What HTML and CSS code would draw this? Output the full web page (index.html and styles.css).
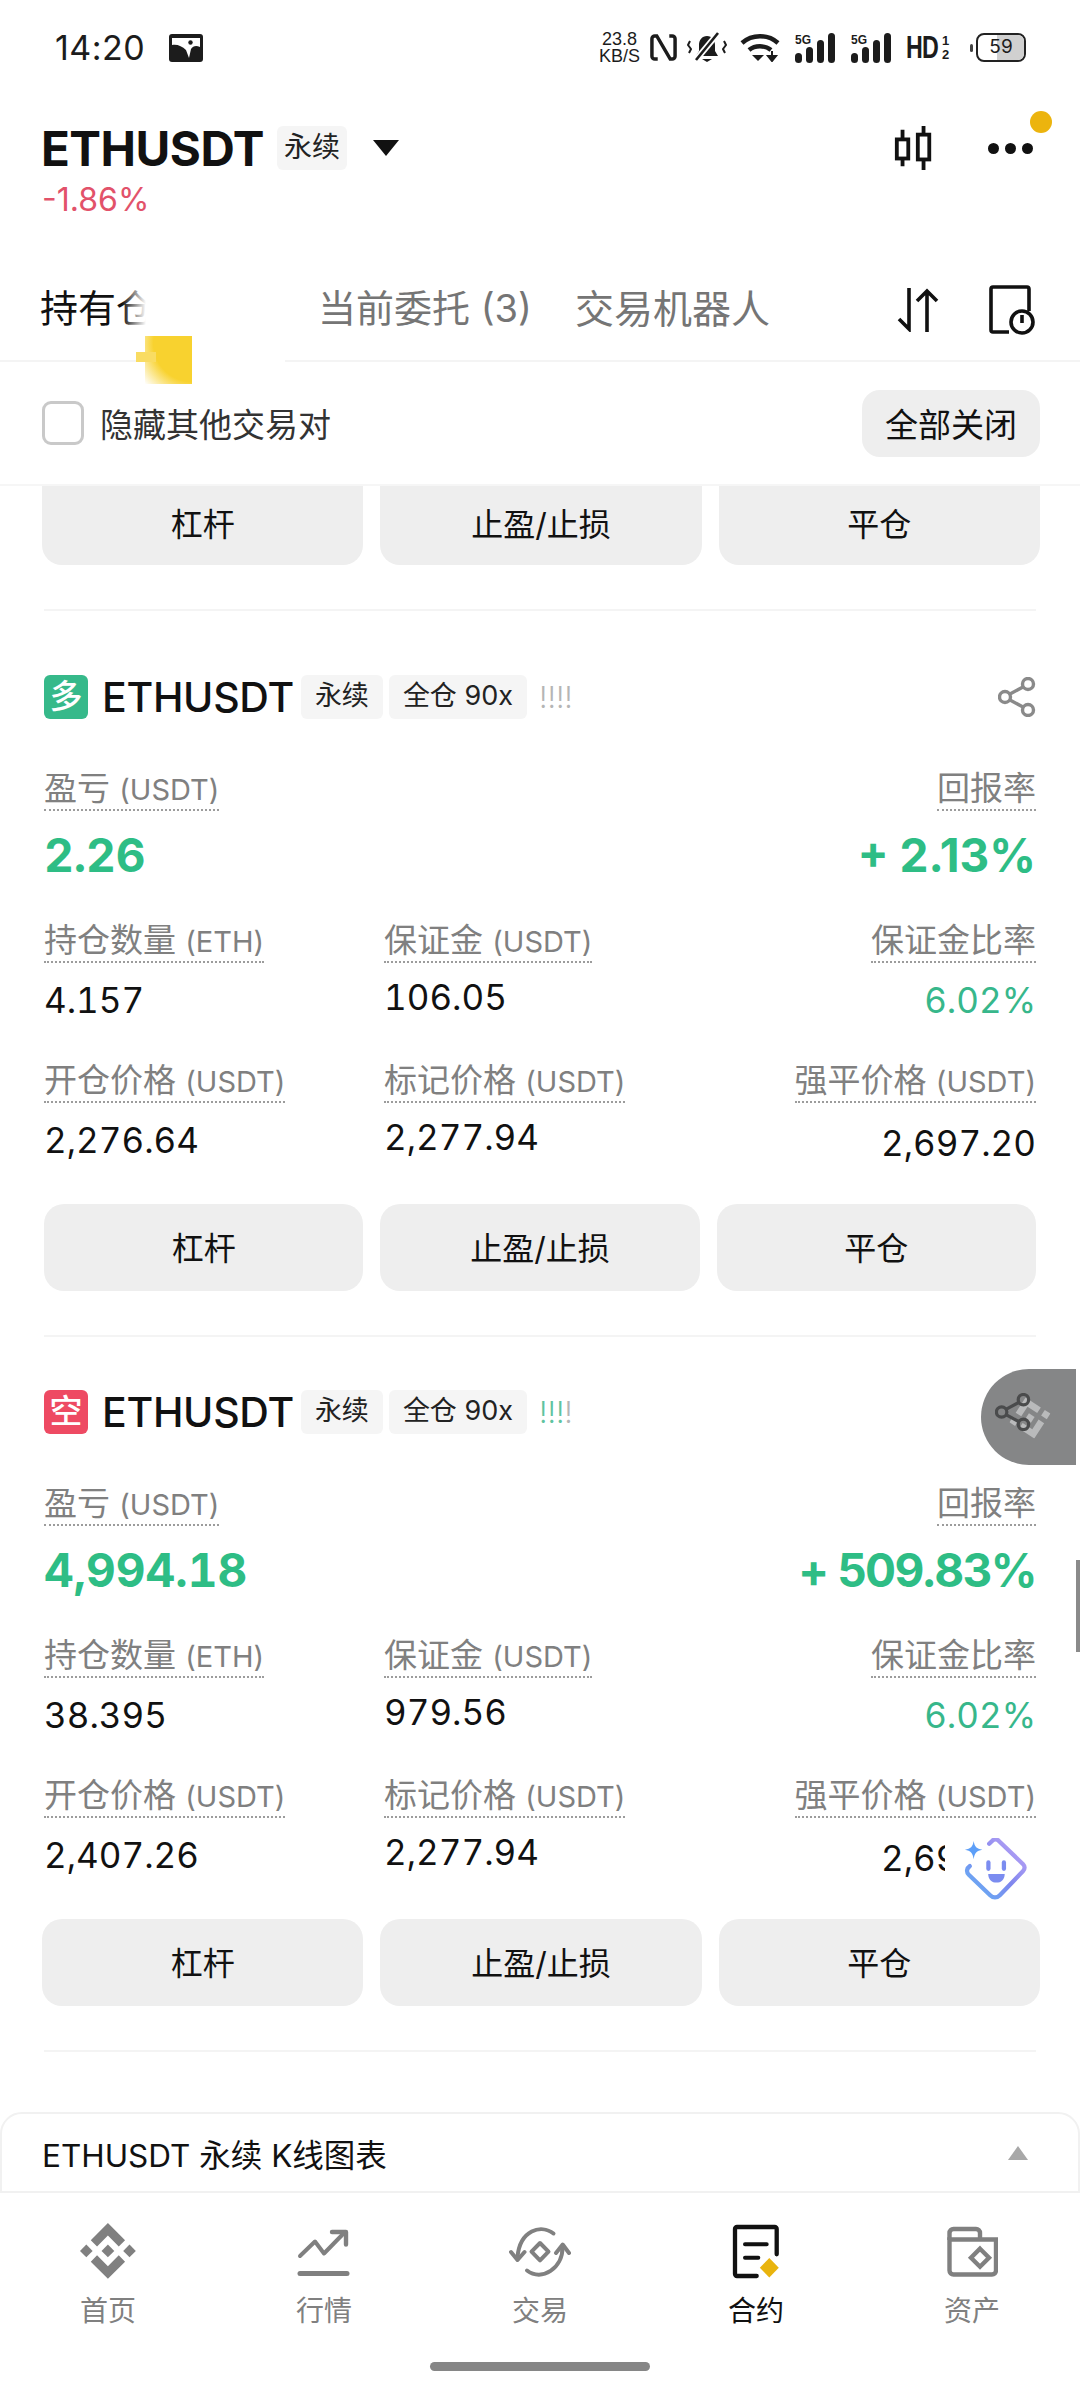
FILE: index.html
```html
<!DOCTYPE html>
<html lang="zh-CN">
<head>
    <meta charset="UTF-8">
    <meta name="viewport" content="width=device-width, initial-scale=1.0">
    <title>ETHUSDT 永续</title>
    <link rel="stylesheet" href="styles.css">
</head>
<body>
<div class="page">
    <div class="status-bar">
        <div class="status-left">
            <span class="clock">14:20</span>
            <svg class="status-app" viewBox="0 0 34 28"><rect width="34" height="28" rx="3" fill="#1c1c1c"/><path d="M3 4h28v9c-4-2-7-1-9 2l-2 9-3-8c-4-4-9-6-14-5z" fill="#fff"/><circle cx="21.500" cy="8.500" r="2.200" fill="#1c1c1c"/></svg>
        </div>
        <div class="status-right">
            <div class="net-speed"><span>23.8</span><span>KB/S</span></div>
            <svg class="icon-nfc" viewBox="0 0 28 30" fill="none" stroke="#1c1c1c" stroke-width="3.6"><path d="M8 27H5a3 3 0 0 1-3-3V6a3 3 0 0 1 3-3h2l14 24h2a3 3 0 0 0 3-3V6a3 3 0 0 0-3-3h-3"/></svg>
            <svg class="icon-bell" viewBox="0 0 40 32"><path d="M20 4c5 0 8 4 8 9v6l3 5H9l3-5v-6c0-5 3-9 8-9z" fill="#1c1c1c"/><path d="M15 27h10l-5 3z" fill="#1c1c1c"/><path d="M32 0L8 29" stroke="#fff" stroke-width="6"/><path d="M31 1L9 28" stroke="#1c1c1c" stroke-width="2.6"/><path d="M3 9l-2 4 3 4-2 4M37 9l2 4-3 4 2 4" fill="none" stroke="#1c1c1c" stroke-width="2"/></svg>
            <svg class="icon-wifi" viewBox="0 0 40 28"><path d="M2 9c10-9 26-9 36 0" fill="none" stroke="#1c1c1c" stroke-width="4.4"/><path d="M9 16c6-5 16-5 22 0" fill="none" stroke="#1c1c1c" stroke-width="4.4"/><path d="M12 21h12l-6 6z" fill="#1c1c1c"/><path d="M32 17v5M28 22h8l-4 5z" stroke="#1c1c1c" stroke-width="2" fill="#1c1c1c"/></svg>
            <svg class="icon-signal" viewBox="0 0 40 30"><g fill="#1c1c1c"><rect x="0" y="20" width="7" height="10" rx="3.5"/><rect x="11" y="14" width="7" height="16" rx="3.5"/><rect x="22" y="7" width="7" height="23" rx="3.5"/><rect x="33" y="0" width="7" height="30" rx="3.5"/></g><text x="0" y="11" class="signal-label">5G</text></svg>
            <svg class="icon-signal" viewBox="0 0 40 30"><g fill="#1c1c1c"><rect x="0" y="20" width="7" height="10" rx="3.5"/><rect x="11" y="14" width="7" height="16" rx="3.5"/><rect x="22" y="7" width="7" height="23" rx="3.5"/><rect x="33" y="0" width="7" height="30" rx="3.5"/></g><text x="0" y="11" class="signal-label">5G</text></svg>
            <div class="hd-mark"><span class="hd-text">HD</span><span class="hd-sims"><span>1</span><span>2</span></span></div>
            <div class="battery-wrap">
                <span class="battery-nub"></span>
                <div class="battery"><span class="battery-level"></span><span class="battery-num">59</span></div>
            </div>
        </div>
    </div>

    <div class="symbol-bar">
        <div class="symbol-row">
            <div class="symbol-left">
                <span class="symbol-name">ETHUSDT</span>
                <span class="tag tag-top">永续</span>
                <span class="caret"></span>
            </div>
            <div class="symbol-tools">
                <svg class="icon-candle" viewBox="0 0 44 46" fill="none" stroke="#111" stroke-width="4"><path d="M10 4v38M32 0v46"/><rect x="4" y="14" width="12" height="20" fill="#fff"/><rect x="26" y="9" width="12" height="26" fill="#fff"/></svg>
                <div class="more-dots"><i></i><i></i><i></i></div>
            </div>
        </div>
        <div class="symbol-change">-1.86%</div>
    </div>

    <div class="tabs">
        <div class="tab tab-active">持有仓位</div>
        <div class="tab tab-orders">当前委托 (3)</div>
        <div class="tab tab-bots">交易机器人</div>
        <div class="tab-tools">
            <svg class="icon-sort" viewBox="0 0 42 44" fill="none" stroke="#111" stroke-width="3.6"><path d="M12 0v41M2 31l10 10 0-10M30 44V3M20 13L30 3l10 10"/></svg>
            <svg class="icon-history" viewBox="0 0 46 50" fill="none" stroke="#111" stroke-width="3.6"><path d="M20 47H4a2 2 0 0 1-2-2V4a2 2 0 0 1 2-2h34a2 2 0 0 1 2 2v22"/><circle cx="33" cy="37" r="11"/><path d="M33 30v8"/></svg>
        </div>
    </div>

    <div class="filter-row">
        <label class="filter-check"><span class="checkbox"></span>隐藏其他交易对</label>
        <button class="close-all">全部关闭</button>
    </div>

    <div class="position-list">
        <div class="actions actions-wide actions-cut">
            <button class="action">杠杆</button>
            <button class="action">止盈/止损</button>
            <button class="action">平仓</button>
        </div>

        <div class="position-card position-card-first">
            <div class="card-head">
                <span class="side side-long">多</span>
                <span class="card-symbol">ETHUSDT</span>
                <span class="tag">永续</span>
                <span class="tag">全仓 90x</span>
                <span class="risk">!!!!</span>
                <svg class="icon-share" viewBox="0 0 38 40" fill="none" stroke="#8a8a8a" stroke-width="3.4"><circle cx="30" cy="7" r="5.5"/><circle cx="7" cy="20" r="5.5"/><circle cx="30" cy="33" r="5.5"/><path d="M12 17l13-7M12 23l13 7"/></svg>
            </div>
            <div class="pnl-row">
                <div class="cell"><span class="label">盈亏 <span class="unit">(USDT)</span></span><div class="pnl">2.26</div></div>
                <div class="cell cell-right"><span class="label">回报率</span><div class="pnl">+ 2.13%</div></div>
            </div>
            <div class="stat-row">
                <div class="cell"><span class="label">持仓数量 <span class="unit">(ETH)</span></span><div class="value">4.157</div></div>
                <div class="cell"><span class="label">保证金 <span class="unit">(USDT)</span></span><div class="value value-up">106.05</div></div>
                <div class="cell cell-right"><span class="label">保证金比率</span><div class="value value-green">6.02%</div></div>
            </div>
            <div class="stat-row stat-row-last">
                <div class="cell"><span class="label">开仓价格 <span class="unit">(USDT)</span></span><div class="value">2,276.64</div></div>
                <div class="cell"><span class="label">标记价格 <span class="unit">(USDT)</span></span><div class="value value-up">2,277.94</div></div>
                <div class="cell cell-right"><span class="label">强平价格 <span class="unit">(USDT)</span></span><div class="value value-down">2,697.20</div></div>
            </div>
            <div class="actions">
                <button class="action">杠杆</button>
                <button class="action">止盈/止损</button>
                <button class="action">平仓</button>
            </div>
        </div>

        <div class="position-card">
            <div class="card-head">
                <span class="side side-short">空</span>
                <span class="card-symbol">ETHUSDT</span>
                <span class="tag">永续</span>
                <span class="tag">全仓 90x</span>
                <span class="risk risk-on">!!!<span class="risk-off">!</span></span>
            </div>
            <div class="pnl-row">
                <div class="cell"><span class="label">盈亏 <span class="unit">(USDT)</span></span><div class="pnl">4,994.18</div></div>
                <div class="cell cell-right"><span class="label">回报率</span><div class="pnl pnl-long">+ 509.83%</div></div>
            </div>
            <div class="stat-row">
                <div class="cell"><span class="label">持仓数量 <span class="unit">(ETH)</span></span><div class="value">38.395</div></div>
                <div class="cell"><span class="label">保证金 <span class="unit">(USDT)</span></span><div class="value value-up">979.56</div></div>
                <div class="cell cell-right"><span class="label">保证金比率</span><div class="value value-green">6.02%</div></div>
            </div>
            <div class="stat-row stat-row-last">
                <div class="cell"><span class="label">开仓价格 <span class="unit">(USDT)</span></span><div class="value">2,407.26</div></div>
                <div class="cell"><span class="label">标记价格 <span class="unit">(USDT)</span></span><div class="value value-up">2,277.94</div></div>
                <div class="cell cell-right"><span class="label">强平价格 <span class="unit">(USDT)</span></span><div class="value value-down">2,697.20</div></div>
            </div>
            <div class="actions actions-wide">
                <button class="action">杠杆</button>
                <button class="action">止盈/止损</button>
                <button class="action">平仓</button>
            </div>
        </div>
        <div class="list-end"></div>
    </div>

    <div class="chart-bar">
        <span>ETHUSDT 永续 K线图表</span>
        <span class="chart-caret"></span>
    </div>

    <div class="bottom-nav">
        <div class="nav-item">
            <svg class="nav-icon" viewBox="0 0 127 127" fill="#808080"><path d="M38.7 53.2L63.3 28.6l24.6 24.6 14.3-14.3L63.3 0 24.4 38.9z"/><path d="M0 63.3L14.3 49l14.3 14.3-14.3 14.3z"/><path d="M38.7 73.4l24.6 24.6 24.6-24.6 14.3 14.3-38.9 38.9-38.9-38.9z"/><path d="M98 63.3L112.3 49l14.3 14.3-14.3 14.3z"/><path d="M77.8 63.3L63.3 48.8 48.8 63.3l14.5 14.5z"/></svg>
            <span>首页</span>
        </div>
        <div class="nav-item">
            <svg class="nav-icon" viewBox="0 0 56 56" fill="none" stroke="#808080" stroke-width="4" stroke-linecap="round" stroke-linejoin="round"><path d="M4 33l15-14.500L28 30.500 49 9"/><path d="M36 9h14v12.500" stroke-width="4.400"/><path d="M4 50.500h47" stroke-width="5"/></svg>
            <span>行情</span>
        </div>
        <div class="nav-item">
            <svg class="nav-icon nav-icon-wide" viewBox="0 0 62 56" fill="none" stroke="#808080" stroke-width="4" stroke-linecap="round" stroke-linejoin="round"><path d="M44.500 10.500C32 1 11 7 8.500 34"/><path d="M53.500 24C54 45 33 59 18 47.500"/><path d="M2 29l6.500 8L15.500 29"/><path d="M47 30l6.700-8.500L60 30"/><path d="M31 20l8.500 8.700-8.500 8.700-8.500-8.700z"/></svg>
            <span>交易</span>
        </div>
        <div class="nav-item nav-item-active">
            <svg class="nav-icon nav-icon-doc" viewBox="0 0 50 56"><path d="M25.700 53H6a2 2 0 0 1-2-2V6a2 2 0 0 1 2-2h37.700a2 2 0 0 1 2 2v25.300" fill="none" stroke="#111" stroke-width="4.300" stroke-linecap="round"/><path d="M14 21.300h21.700M14 34.700h13.300" stroke="#111" stroke-width="4" stroke-linecap="round"/><path d="M38.300 35l9.500 9.700-9.500 9.700-9.500-9.700z" fill="#e9b40e"/></svg>
            <span>合约</span>
        </div>
        <div class="nav-item">
            <svg class="nav-icon nav-icon-wallet" viewBox="0 0 52 56" fill="none" stroke="#808080" stroke-width="4.400"><path d="M3.500 17V10a4 4 0 0 1 4-4H30a4 4 0 0 1 4 4v6.500"/><path d="M3.500 16.500H50v31a4 4 0 0 1-4 4H7.500a4 4 0 0 1-4-4z"/><path d="M34 25.700l9 9-9 9-9-9z"/></svg>
            <span>资产</span>
        </div>
        <div class="home-indicator"></div>
    </div>

    <div class="tab-glare"></div>
    <div class="tab-marker"></div>
    <span class="alert-dot"></span>
    <div class="float-tab">
        <svg class="float-logo" viewBox="0 0 127 127" fill="#b9babb"><path d="M38.7 53.2L63.3 28.6l24.6 24.6 14.3-14.3L63.3 0 24.4 38.9z"/><path d="M0 63.3L14.3 49l14.3 14.3-14.3 14.3z"/><path d="M38.7 73.4l24.6 24.6 24.6-24.6 14.3 14.3-38.9 38.9-38.9-38.9z"/><path d="M98 63.3L112.3 49l14.3 14.3-14.3 14.3z"/><path d="M77.8 63.3L63.3 48.8 48.8 63.3l14.5 14.5z"/></svg>
        <svg class="float-share" viewBox="0 0 38 40" fill="none" stroke="#4a4b4c" stroke-width="3.4"><circle cx="30" cy="7" r="5.5"/><circle cx="7" cy="20" r="5.5"/><circle cx="30" cy="33" r="5.5"/><path d="M12 17l13-7M12 23l13 7"/></svg>
    </div>
    <div class="scroll-thumb"></div>
    <div class="helper-btn">
        <svg viewBox="0 0 66 66" fill="none">
            <defs><linearGradient id="helperGrad" x1="0" y1="1" x2="1" y2="0"><stop offset="0" stop-color="#62b6f5"/><stop offset=".5" stop-color="#7f86ee"/><stop offset="1" stop-color="#c7a9f7"/></linearGradient></defs>
            <path d="M27 6l3-3c2-2 5-2 7 0l25 24c2 2 2 5 0 7L38 59c-3 3-7 3-10 0L6 38c-3-3-2-7 1-9" stroke="url(#helperGrad)" stroke-width="4.4" stroke-linecap="round"/>
            <path d="M11 3c1 6 3 8 9 9-6 1-8 3-9 10-1-7-3-9-9-10 6-1 8-3 9-9z" fill="#5d9ff8"/>
            <rect x="24" y="23" width="4.4" height="11" rx="2.2" fill="#7b8cf0"/><rect x="40" y="23" width="4.4" height="11" rx="2.2" fill="#7b8cf0"/>
            <path d="M26 37h17c0 6-4 9-8.500 9S26 43 26 37z" fill="#7b8cf0"/>
        </svg>
    </div>
</div>
</body>
</html>
```

FILE: styles.css
```css
body, html {
    margin: 0;
    padding: 0;
    background-color: #fff;
    color: #111;
    font-family: Inter, "Noto Sans CJK SC", sans-serif;
}

.page {
    position: relative;
    width: 1080px;
    height: 2400px;
    overflow: hidden;
    display: flex;
    flex-direction: column;
}

/* status bar */
.status-bar {
    height: 95px;
    flex: none;
    padding: 0 54px 0 55px;
    display: flex;
    justify-content: space-between;
    align-items: center;
    box-sizing: border-box;
    color: #1c1c1c;
}

.status-left {
    display: flex;
    align-items: center;
    gap: 24px;
}

.clock {
    font-size: 34px;
    letter-spacing: 0.5px;
}

.status-app {
    width: 34px;
    height: 28px;
}

.status-right {
    display: flex;
    align-items: center;
    gap: 10px;
}

.net-speed {
    display: flex;
    flex-direction: column;
    align-items: center;
    font-size: 18px;
    line-height: 17px;
    font-family: "Liberation Sans", sans-serif;
}

.icon-nfc { width: 27px; height: 29px; }
.icon-bell { width: 40px; height: 32px; }
.icon-wifi { width: 40px; height: 28px; margin-left: 3px; }
.icon-signal { width: 40px; height: 30px; margin-left: 5px; }
.icon-signal + .icon-signal { margin-left: 6px; }

.signal-label {
    font-size: 12px;
    font-weight: 700;
    font-family: "Liberation Sans", sans-serif;
    fill: #1c1c1c;
}

.hd-mark {
    display: flex;
    align-items: center;
    gap: 2px;
    margin-left: 5px;
}

.hd-text {
    display: inline-block;
    width: 34px;
    font-size: 31px;
    font-weight: 700;
    font-family: "Liberation Sans", sans-serif;
    letter-spacing: -1px;
    transform: scaleX(0.75);
    transform-origin: left center;
}

.hd-sims {
    display: flex;
    flex-direction: column;
    width: 8px;
    font-size: 13px;
    line-height: 14px;
    font-weight: 700;
    font-family: "Liberation Sans", sans-serif;
}

.battery-wrap {
    display: flex;
    align-items: center;
    gap: 3px;
    margin-left: 10px;
}

.battery-nub {
    width: 3px;
    height: 8px;
    background-color: #444;
    border-radius: 2px;
}

.battery {
    position: relative;
    width: 50px;
    height: 29px;
    border: 2.500px solid #222;
    border-radius: 8px;
    box-sizing: border-box;
    overflow: hidden;
    text-align: center;
}

.battery-level {
    position: absolute;
    top: 0;
    bottom: 0;
    right: 0;
    width: 27px;
    background-color: #d0d0d0;
}

.battery-num {
    position: relative;
    font-size: 19px;
    line-height: 24px;
    display: block;
}

/* symbol header */
.symbol-bar {
    height: 165px;
    flex: none;
    padding: 25px 42px 0 41px;
    box-sizing: border-box;
}

.symbol-row {
    height: 56px;
    display: flex;
    justify-content: space-between;
    align-items: center;
}

.symbol-left {
    display: flex;
    align-items: center;
}

.symbol-name {
    font-size: 47.500px;
    font-weight: 700;
    letter-spacing: -0.5px;
}

.tag {
    display: inline-block;
    background-color: #f5f5f5;
    border-radius: 6px;
    padding: 0 14px;
    height: 44px;
    line-height: 42px;
    font-size: 27px;
    color: #222;
    white-space: nowrap;
}

.tag-top {
    margin-left: 13px;
    padding: 0 7px;
    font-size: 28px;
}

.caret {
    width: 0;
    height: 0;
    margin-left: 26px;
    border-left: 13px solid transparent;
    border-right: 13px solid transparent;
    border-top: 16px solid #111;
}

.symbol-tools {
    display: flex;
    align-items: center;
    gap: 53px;
    padding-right: 5px;
}

.icon-candle { width: 42px; height: 46px; }

.more-dots {
    display: flex;
    gap: 6px;
}

.more-dots i {
    width: 11px;
    height: 11px;
    border-radius: 50%;
    background-color: #111;
}

.symbol-change {
    margin-top: 7px;
    margin-left: 1px;
    font-size: 32px;
    line-height: 34px;
    color: #e2526a;
}

/* tabs */
.tabs {
    height: 102px;
    flex: none;
    display: flex;
    align-items: center;
    padding: 0 45px 0 40px;
    border-bottom: 2px solid #f4f4f4;
    box-sizing: border-box;
    position: relative;
}

.tab {
    margin-bottom: 9px;
    font-size: 38px;
    color: #757575;
    white-space: nowrap;
}

.tab-active {
    color: #111;
    width: 278px;
}

.tab-orders {
    width: 257px;
}

.tab-bots {
    font-size: 39px;
}

.tab-tools {
    margin-left: auto;
    display: flex;
    align-items: center;
    gap: 50px;
}

.icon-sort { width: 42px; height: 44px; }
.icon-history { width: 46px; height: 50px; }

/* filter */
.filter-row {
    height: 124px;
    flex: none;
    display: flex;
    justify-content: space-between;
    align-items: center;
    padding: 0 40px 0 42px;
    border-bottom: 2px solid #f6f6f6;
    box-sizing: border-box;
}

.filter-check {
    display: flex;
    align-items: center;
    gap: 16px;
    font-size: 33px;
    color: #333;
}

.checkbox {
    width: 36px;
    height: 38px;
    border: 3px solid #c9c9c9;
    border-radius: 9px;
}

.close-all {
    width: 178px;
    height: 67px;
    background-color: #eeeeee;
    border: none;
    border-radius: 18px;
    font: inherit;
    font-size: 33px;
    color: #111;
    padding: 0;
}

/* positions */
.position-list {
    height: 1626px;
    flex: none;
    overflow: hidden;
    padding: 0 44px;
    box-sizing: border-box;
}

.actions {
    display: grid;
    grid-template-columns: repeat(3, 1fr);
    gap: 17px;
    height: 87px;
}

.actions-wide {
    margin: 0 -4px 0 -2px;
}

.actions-cut {
    height: 79px;
    margin-bottom: 44px;
}

.action {
    background-color: #eeeeee;
    border: none;
    border-radius: 20px;
    font: inherit;
    font-size: 32px;
    color: #111;
    padding: 0 0 4px;
}

.actions-cut .action {
    padding-bottom: 8px;
    border-radius: 0 0 20px 20px;
}

.position-card {
    border-top: 2px solid #f4f4f4;
    padding: 53px 0 44px;
}

.position-card-first {
    padding-top: 64px;
}

.card-head {
    display: flex;
    align-items: center;
    height: 44px;
    position: relative;
}

.side {
    width: 44px;
    height: 44px;
    border-radius: 6px;
    color: #fff;
    font-size: 33px;
    font-weight: 500;
    line-height: 42px;
    text-align: center;
}

.side-long { background-color: #36b98a; }
.side-short { background-color: #ee4a63; }

.card-symbol {
    margin-left: 14px;
    margin-right: 7px;
    font-size: 41px;
    font-weight: 500;
    letter-spacing: -0.3px;
}

.card-head .tag + .tag {
    margin-left: 6px;
}

.risk {
    margin-left: 12px;
    font-size: 30px;
    color: #b5b5b5;
    font-weight: 300;
}

.risk-on {
    color: #5fc3a0;
}

.risk-off {
    color: #b5b5b5;
}

.icon-share {
    width: 38px;
    height: 40px;
    margin-left: auto;
}

.pnl-row {
    display: flex;
    justify-content: space-between;
    margin-top: 48px;
}

.stat-row {
    display: grid;
    grid-template-columns: 340px 340px 1fr;
    margin-top: 36px;
}

.stat-row-last {
    margin-top: 38px;
}

.cell-right {
    text-align: right;
}

.label {
    display: inline-block;
    height: 42px;
    line-height: 42px;
    font-size: 33px;
    color: #808080;
    border-bottom: 2px dotted #9c9c9c;
    white-space: nowrap;
}

.unit {
    font-size: 29px;
}

.pnl {
    margin-top: 16px;
    height: 56px;
    line-height: 56px;
    font-size: 46px;
    font-weight: 700;
    font-variant-numeric: tabular-nums;
    color: #2ebd85;
}

.cell-right .pnl {
    font-variant-numeric: normal;
}

.pnl-long {
    letter-spacing: -1.500px;
}

.value {
    margin-top: 16px;
    height: 42px;
    line-height: 42px;
    font-size: 35px;
    font-variant-numeric: tabular-nums;
    color: #111;
}

.value-up { margin-top: 13px; }
.value-down { margin-top: 19px; }
.value-green { color: #37b78b; }

.stat-row-last + .actions {
    margin-top: 40px;
}

.list-end {
    border-top: 2px solid #f4f4f4;
}

/* chart bar */
.chart-bar {
    height: 81px;
    flex: none;
    margin-top: 0;
    padding: 0 50px 0 40px;
    border: 2px solid #f1f1f1;
    border-radius: 22px 22px 0 0;
    display: flex;
    justify-content: space-between;
    align-items: center;
    box-sizing: border-box;
    font-size: 31.500px;
    color: #111;
}

.chart-caret {
    width: 0;
    height: 0;
    border-left: 10px solid transparent;
    border-right: 10px solid transparent;
    border-bottom: 14px solid #a8a8a8;
}

/* bottom nav */
.bottom-nav {
    flex: 1;
    display: flex;
    padding-top: 30px;
    box-sizing: border-box;
    position: relative;
}

.nav-item {
    width: 216px;
    display: flex;
    flex-direction: column;
    align-items: center;
    font-size: 28px;
    color: #808080;
}

.nav-icon {
    width: 56px;
    height: 56px;
    margin-bottom: 10px;
}

.nav-icon-wide { width: 62px; }
.nav-icon-doc { width: 50px; }
.nav-icon-wallet { width: 52px; }

.nav-item-active {
    color: #111;
}

.home-indicator {
    position: absolute;
    left: 430px;
    bottom: 29px;
    width: 220px;
    height: 9px;
    border-radius: 5px;
    background-color: #868686;
}

/* overlays */
.tab-glare {
    position: absolute;
    left: 122px;
    top: 262px;
    width: 165px;
    height: 78px;
    background: linear-gradient(90deg, rgba(255, 255, 255, 0) 0, #fff 24px);
}

.tab-glare::after {
    content: "";
    position: absolute;
    left: 68px;
    top: 70px;
    width: 95px;
    height: 40px;
    background-color: #fff;
}

.tab-marker {
    position: absolute;
    left: 145px;
    top: 336px;
    width: 47px;
    height: 48px;
    background: radial-gradient(circle at 100% 15%, #f8d22f 62%, rgba(248, 210, 47, 0) 100%);
}

.tab-marker::before {
    content: "";
    position: absolute;
    left: -9px;
    top: 16px;
    width: 20px;
    height: 10px;
    background-color: #f9dc62;
}

.alert-dot {
    position: absolute;
    left: 1030px;
    top: 111px;
    width: 22px;
    height: 22px;
    border-radius: 50%;
    background-color: #ecb40e;
}

.float-tab {
    position: absolute;
    left: 981px;
    top: 1369px;
    width: 95px;
    height: 96px;
    border-radius: 48px 0 0 48px;
    background-color: #858687;
}

.float-logo {
    position: absolute;
    left: 28px;
    top: 28px;
    width: 42px;
    height: 42px;
    transform: rotate(-12deg);
}

.float-share {
    position: absolute;
    left: 14px;
    top: 24px;
    width: 36px;
    height: 38px;
}

.scroll-thumb {
    position: absolute;
    left: 1076px;
    top: 1560px;
    width: 4px;
    height: 92px;
    background-color: #8a8a8a;
}

.helper-btn {
    position: absolute;
    left: 945px;
    top: 1830px;
    width: 100px;
    height: 80px;
    padding-left: 18px;
    box-sizing: border-box;
    background-color: #fff;
    display: flex;
    align-items: center;
}

.helper-btn svg {
    width: 64px;
    height: 64px;
}
```
